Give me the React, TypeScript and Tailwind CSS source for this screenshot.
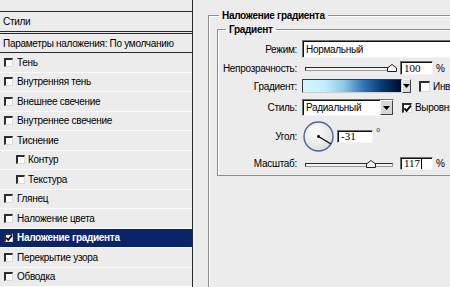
import React from "react";

const layerStyles = [
  { label: "Тень" },
  { label: "Внутренняя тень" },
  { label: "Внешнее свечение" },
  { label: "Внутреннее свечение" },
  { label: "Тиснение" },
  { label: "Контур", sub: true },
  { label: "Текстура", sub: true },
  { label: "Глянец" },
  { label: "Наложение цвета" },
  { label: "Наложение градиента", active: true },
  { label: "Перекрытие узора" },
  { label: "Обводка" },
];

function CheckBox({ checked = false, className }: { checked?: boolean; className: string }) {
  return (
    <span
      className={`relative block shrink-0 bg-white border-t-2 border-l-2 border-r border-b border-t-[#2e2e2e] border-l-[#2e2e2e] border-r-[#d9d9d9] border-b-[#d9d9d9] ${className}`}
    >
      {checked && (
        <svg viewBox="0 0 8 8" className="absolute -left-[1px] -top-[1px] w-[calc(100%+2px)] h-[calc(100%+2px)]">
          <path d="M1.2 3.8 L3.2 6 L7 1.4" stroke="#000" strokeWidth="1.7" fill="none" />
        </svg>
      )}
    </span>
  );
}

function DownArrow() {
  return (
    <svg width="7" height="4" viewBox="0 0 7 4">
      <path d="M0 0 H7 L3.5 4 Z" fill="#000" />
    </svg>
  );
}

function Slider({ pos }: { pos: number }) {
  return (
    <div className="relative ml-[3px] w-[88px] h-full shrink-0">
      <div className="absolute left-0 right-0 top-[6px] h-[4px] bg-[#f3f3f3] border border-t-[#2a2a2a] border-l-[#2a2a2a] border-r-[#9a9a9a] border-b-[#9a9a9a]" />
      <svg className="absolute top-[3px]" style={{ left: pos - 5 }} width="10" height="8" viewBox="0 0 10 8">
        <path d="M0.5 7.5 V4 L5 0.5 L9.5 4 V7.5 Z" fill="#f7f7f7" stroke="#1e1e1e" />
      </svg>
    </div>
  );
}

function NumberField({ value, width, caret = false }: { value: string; width: string; caret?: boolean }) {
  return (
    <div
      className={`flex items-center h-full bg-white pl-[3px] border border-t-[#707070] border-l-[#707070] border-r-[#f4f4f4] border-b-[#f4f4f4] shadow-[inset_1px_1px_0_#111] font-['Liberation_Serif',serif] text-[11px] tracking-normal ${width}`}
    >
      <span>{value}</span>
      {caret && <span className="block w-[1px] h-[11px] bg-black ml-[1px]" />}
    </div>
  );
}

function Row({ label, className, children }: { label: string; className: string; children: React.ReactNode }) {
  return (
    <div className={`flex items-center whitespace-nowrap ${className}`}>
      <span className="w-[79px] shrink-0 text-right">{label}</span>
      <div className="ml-[5px] flex items-center h-full">{children}</div>
    </div>
  );
}

export default function App() {
  return (
    <div className="w-[450px] h-[287px] overflow-hidden bg-[#ececec] flex text-black text-[10px] leading-[13px] tracking-[-0.3px] font-['Liberation_Sans',Arial,sans-serif]">
      <aside className="w-[193px] shrink-0 border-r border-[#2a2a2a] pt-[11px] flex flex-col">
        <div className="h-[24px] border-t border-b-[3px] border-double border-[#2a2a2a] pl-[3px] flex items-center">
          Стили
        </div>
        <div className="h-[19px] border-b border-[#2a2a2a] pl-[3px] flex items-center whitespace-nowrap">
          Параметры наложения: По умолчанию
        </div>
        {layerStyles.map((s) => (
          <div
            key={s.label}
            className={`h-[19.5px] shrink-0 border-b border-[#fbfbfb] flex items-center whitespace-nowrap ${
              s.active ? "bg-[#0a246a] text-white font-bold" : ""
            }`}
          >
            <CheckBox checked={s.active} className={s.sub ? "ml-[16px] w-[9px] h-[9px]" : "ml-[4px] w-[9px] h-[9px]"} />
            <span className={s.sub ? "ml-[3px]" : "ml-[4px]"}>{s.label}</span>
          </div>
        ))}
      </aside>

      <main className="flex-1">
        <fieldset className="ml-[15px] mt-[9px] w-[300px] h-[300px] min-w-0 border border-[#8d8d8d] shadow-[inset_1px_1px_0_#fff]">
          <legend className="ml-[10px] px-[3px] font-bold">Наложение градиента</legend>

          <fieldset className="ml-[8px] mt-[1px] w-[270px] min-w-0 pb-[5px] border border-[#8d8d8d] shadow-[inset_1px_1px_0_#fff]">
            <legend className="ml-[8px] px-[3px] font-bold">Градиент</legend>

            <Row label="Режим:" className="mt-[4px] h-[18px]">
              <div className="h-full w-[170px] bg-white pl-[3px] flex items-center border border-t-[#707070] border-l-[#707070] border-r-[#f4f4f4] border-b-[#f4f4f4] shadow-[inset_1px_1px_0_#111]">
                Нормальный
              </div>
            </Row>

            <Row label="Непрозрачность:" className="mt-[3px] h-[14px]">
              <Slider pos={87} />
              <div className="ml-[7px] h-full">
                <NumberField value="100" width="w-[33px]" />
              </div>
              <span className="ml-[3px]">%</span>
            </Row>

            <Row label="Градиент:" className="mt-[4px] h-[14px]">
              <div className="h-full w-[100px] border border-t-[#3a3a3a] border-l-[#3a3a3a] border-r-[#cfcfcf] border-b-[#cfcfcf] bg-[linear-gradient(to_right,#d4f5ff_0%,#c3eefd_22%,#8cc6e8_42%,#2f74b4_62%,#063c78_80%,#000b2a_100%)]" />
              <div className="h-full w-[9px] flex items-center justify-center bg-[#dedede] border border-t-white border-l-white border-r-[#404040] border-b-[#404040]">
                <DownArrow />
              </div>
              <CheckBox className="ml-[8px] w-[11px] h-[11px]" />
              <span className="ml-[3px]">Инверсия</span>
            </Row>

            <Row label="Стиль:" className="mt-[6px] h-[17px]">
              <div className="h-full w-[92px] flex bg-white border border-t-[#707070] border-l-[#707070] border-r-[#f4f4f4] border-b-[#f4f4f4] shadow-[inset_1px_1px_0_#111]">
                <span className="flex-1 pl-[3px] flex items-center">Радиальный</span>
                <span className="w-[13px] flex items-center justify-center bg-[#d8d8d8] border border-t-white border-l-white border-r-[#404040] border-b-[#404040]">
                  <DownArrow />
                </span>
              </div>
              <CheckBox checked className="ml-[8px] w-[10px] h-[10px]" />
              <span className="ml-[3px]">Выровнять</span>
            </Row>

            <Row label="Угол:" className="mt-[5px] h-[31px]">
              <svg className="ml-[1px]" width="31" height="31" viewBox="0 0 31 31">
                <defs>
                  <radialGradient id="dial" cx="40%" cy="35%" r="70%">
                    <stop offset="0%" stopColor="#ffffff" />
                    <stop offset="100%" stopColor="#dcdcdc" />
                  </radialGradient>
                </defs>
                <circle cx="15.5" cy="15.5" r="14.5" fill="url(#dial)" stroke="#4f6399" strokeWidth="1.4" />
                <line x1="15.5" y1="15.5" x2="28" y2="23" stroke="#000" strokeWidth="1.2" />
                <circle cx="15.5" cy="15.5" r="1.4" fill="#000" />
              </svg>
              <div className="ml-[3px] h-[13px]">
                <NumberField value="-31" width="w-[36px]" />
              </div>
              <span className="ml-[3px] self-start mt-[6px] font-['Liberation_Serif',serif] text-[11px] leading-[10px]">°</span>
            </Row>

            <Row label="Масштаб:" className="mt-[5px] h-[13px]">
              <Slider pos={66} />
              <div className="ml-[7px] h-full">
                <NumberField value="117" width="w-[33px]" caret />
              </div>
              <span className="ml-[3px]">%</span>
            </Row>
          </fieldset>
        </fieldset>
      </main>
    </div>
  );
}
